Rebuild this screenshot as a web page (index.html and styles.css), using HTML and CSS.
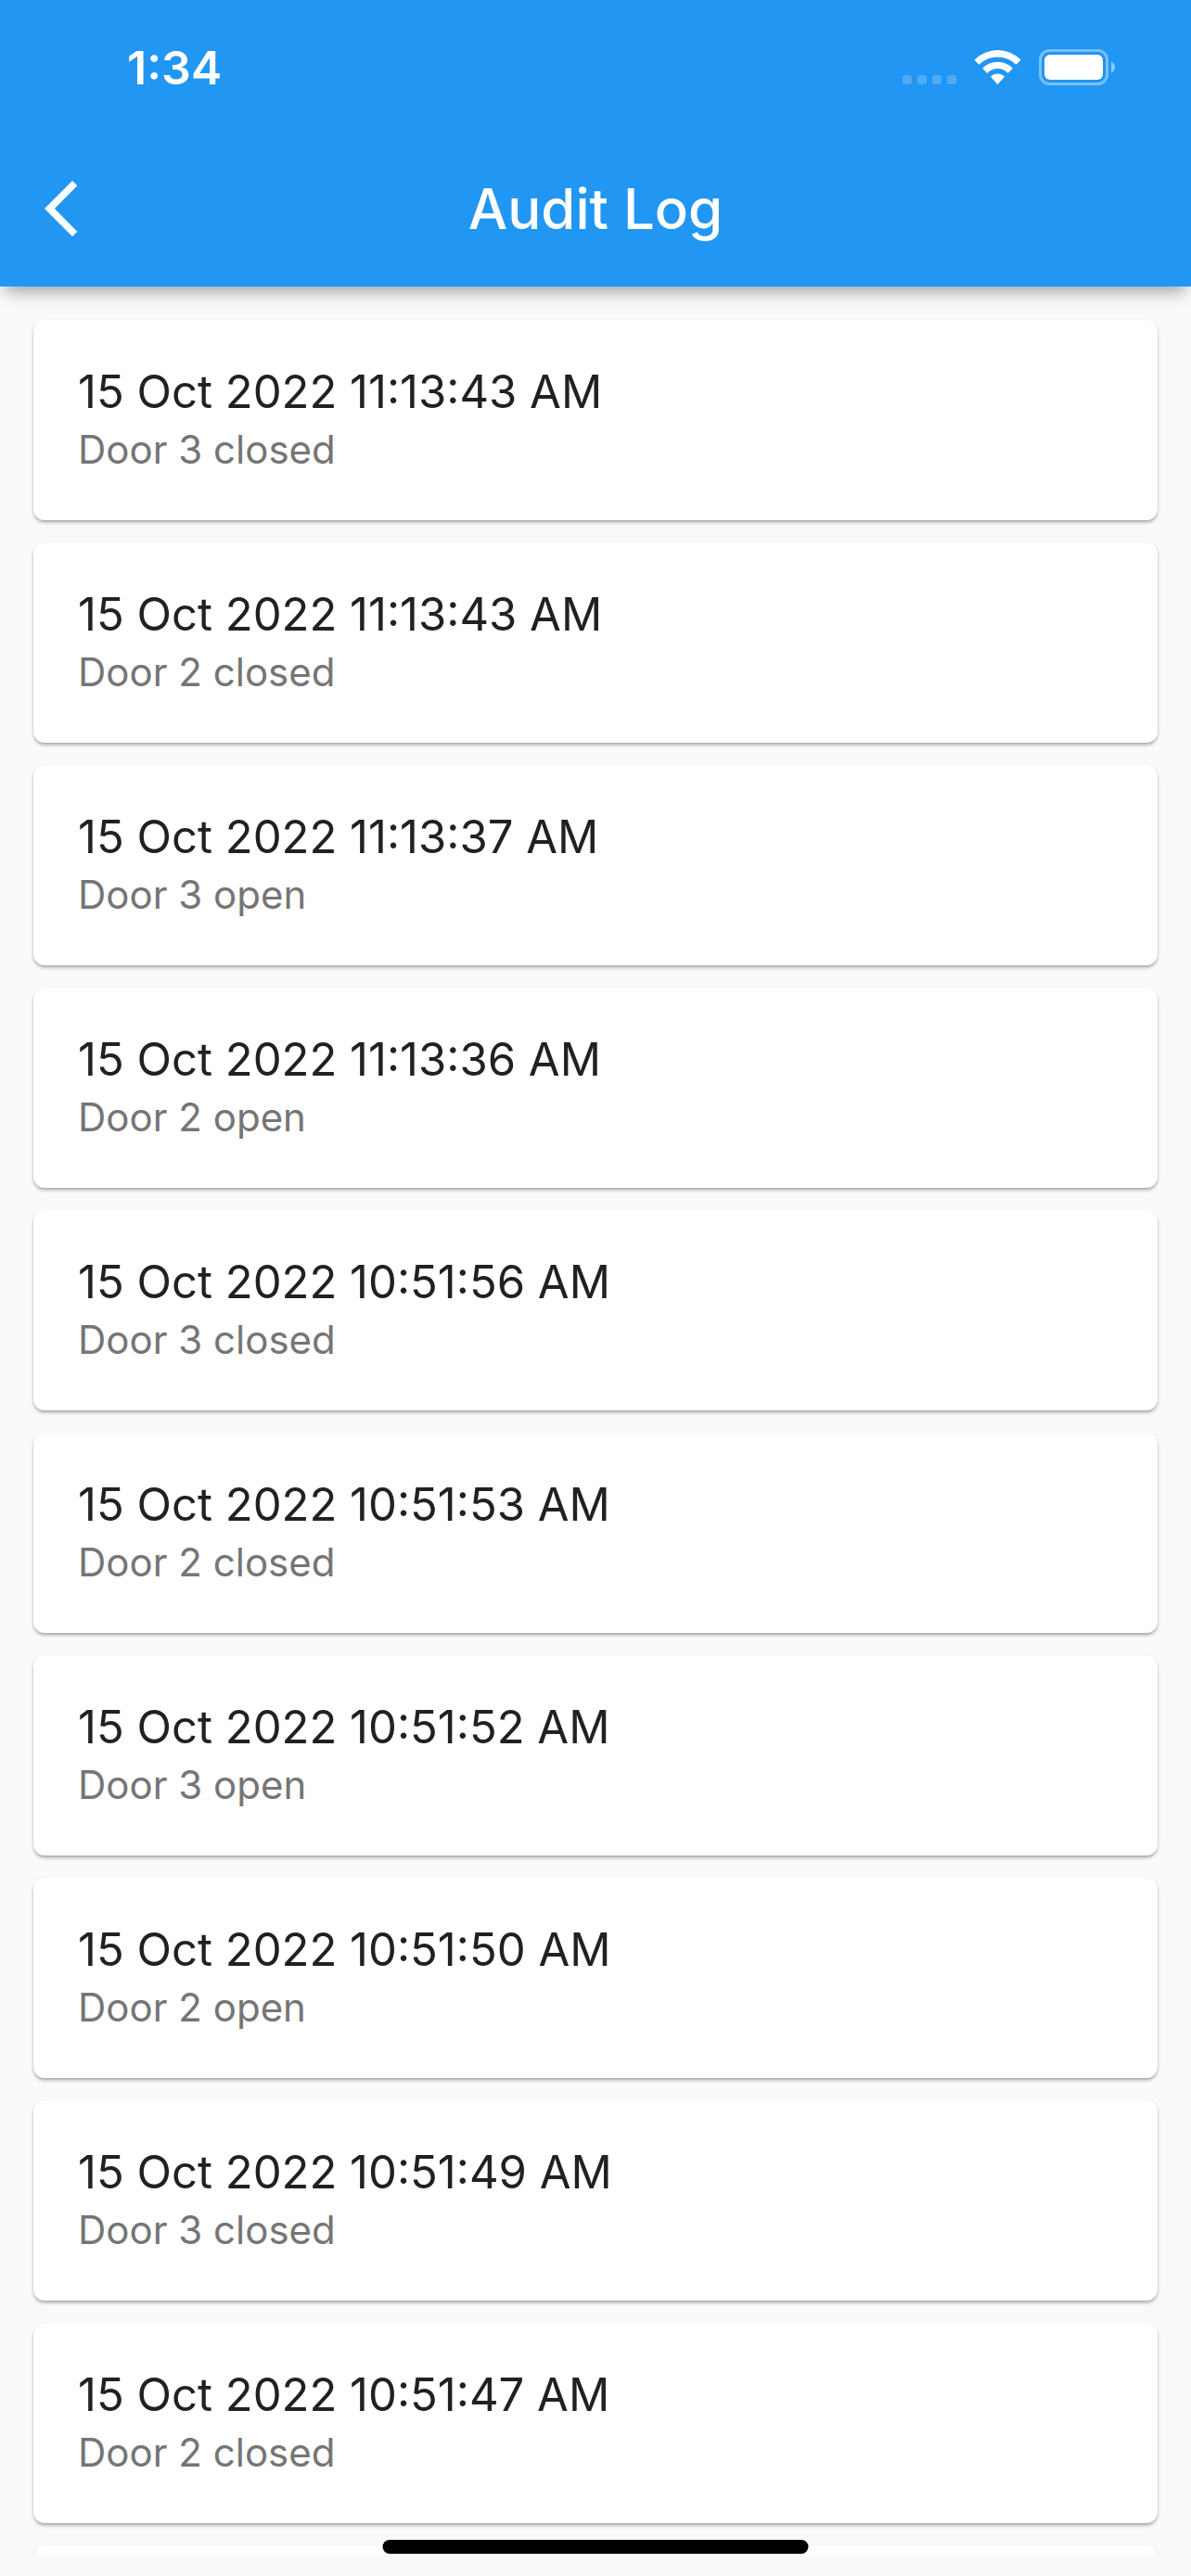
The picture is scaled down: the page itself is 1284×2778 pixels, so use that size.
FILE: index.html
```html
<!DOCTYPE html>
<html lang="en">
<head>
<meta charset="utf-8">
<meta name="viewport" content="width=device-width, initial-scale=1">
<title>Audit Log</title>
<link rel="stylesheet" href="styles.css">
</head>
<body class="screen">
<header class="header">
  <div class="status">
    <time class="clock">1:34</time>
    <svg class="signals" width="232" height="42" viewBox="971 52 232 42" fill="#fff" aria-hidden="true">
      <g fill-opacity=".2">
        <rect x="973" y="81" width="10" height="10" rx="3"/>
        <rect x="989" y="81" width="10" height="10" rx="3"/>
        <rect x="1005" y="81" width="10" height="10" rx="3"/>
        <rect x="1021" y="81" width="10" height="10" rx="3"/>
      </g>
      <path d="M1050.4 64.4Q1061.500 53.900 1075.500 53.900T1100.600 64.400L1095.500 69.700Q1087 61.500 1075.500 61.500T1055.500 69.700Z"/>
      <path d="M1059.200 73.700Q1066 66.800 1075.500 66.800T1091.800 73.700L1086.700 78.900Q1082 74.100 1075.500 74.100T1064.300 78.900Z"/>
      <path d="M1068 82.700Q1071 79.600 1075.500 79.600T1083 82.700L1075.500 91Z"/>
      <rect x="1121.500" y="54.500" width="72" height="36" rx="10" fill="none" stroke="#fff" stroke-opacity=".4" stroke-width="3"/>
      <rect x="1126" y="59" width="63" height="27" rx="6"/>
      <path d="M1198 66.500Q1202 68.500 1202 72.500T1198 78.500Z" fill-opacity=".5"/>
    </svg>
  </div>
  <div class="toolbar">
    <button class="back" type="button" aria-label="Back">
      <svg width="36" height="60" viewBox="0 0 36 60" fill="#fff" aria-hidden="true"><path d="M0 30 30 0 35.300 5.300 10.900 30 35.300 54.700 30 60Z"/></svg>
    </button>
    <h1 class="title">Audit Log</h1>
  </div>
</header>
<main class="content">
  <ul class="log">
    <li class="card"><time class="stamp">15 Oct 2022 11:13:43 AM</time><p class="event">Door 3 closed</p></li>
    <li class="card"><time class="stamp">15 Oct 2022 11:13:43 AM</time><p class="event">Door 2 closed</p></li>
    <li class="card"><time class="stamp">15 Oct 2022 11:13:37 AM</time><p class="event">Door 3 open</p></li>
    <li class="card"><time class="stamp">15 Oct 2022 11:13:36 AM</time><p class="event">Door 2 open</p></li>
    <li class="card"><time class="stamp">15 Oct 2022 10:51:56 AM</time><p class="event">Door 3 closed</p></li>
    <li class="card"><time class="stamp">15 Oct 2022 10:51:53 AM</time><p class="event">Door 2 closed</p></li>
    <li class="card"><time class="stamp">15 Oct 2022 10:51:52 AM</time><p class="event">Door 3 open</p></li>
    <li class="card"><time class="stamp">15 Oct 2022 10:51:50 AM</time><p class="event">Door 2 open</p></li>
    <li class="card"><time class="stamp">15 Oct 2022 10:51:49 AM</time><p class="event">Door 3 closed</p></li>
    <li class="card"><time class="stamp">15 Oct 2022 10:51:47 AM</time><p class="event">Door 2 closed</p></li>
    <li class="card" aria-hidden="true"></li>
  </ul>
</main>
<div class="home-indicator"></div>
</body>
</html>
```

FILE: styles.css
```css
* {
  box-sizing: border-box;
}

.screen {
  position: relative;
  display: flex;
  flex-direction: column;
  height: 100vh;
  margin: 0;
  padding-bottom: 24px;
  overflow: hidden;
  background: #fafafa;
  color: #212121;
  font-family: Inter, "Liberation Sans", sans-serif;
}

.header {
  position: relative;
  z-index: 1;
  flex: none;
  background: #2196f3;
  color: #fff;
  box-shadow: 0 12px 16px -6px rgba(0, 0, 0, 0.34);
}

.status {
  display: flex;
  align-items: center;
  justify-content: space-between;
  height: 141px;
  padding: 5px 81px 0 137px;
}

.clock {
  font-size: 50px;
  font-weight: 600;
  line-height: 60px;
}

.toolbar {
  display: grid;
  grid-template-columns: 168px 1fr 168px;
  align-items: center;
  height: 168px;
}

.back {
  display: flex;
  align-items: center;
  height: 168px;
  padding: 0 48px;
  border: 0;
  background: none;
}

.title {
  margin: 0;
  font-size: 60px;
  font-weight: 500;
  line-height: 72px;
  text-align: center;
}

.content {
  flex: 1;
  min-height: 0;
  overflow: hidden;
}

.log {
  display: flex;
  flex-direction: column;
  gap: 24px;
  margin: 0;
  padding: 36px;
  list-style: none;
}

.card {
  flex: none;
  min-height: 216px;
  padding: 46px 48px;
  border-radius: 12px;
  background: #fff;
  box-shadow: 0 3px 4px -1px rgba(0, 0, 0, 0.32), 0 1px 3px rgba(0, 0, 0, 0.12);
}

.stamp {
  display: block;
  font-size: 49px;
  line-height: 64px;
}

.event {
  margin: 0;
  color: #757575;
  font-size: 42px;
  line-height: 60px;
}

.home-indicator {
  position: absolute;
  bottom: 24px;
  left: 50%;
  width: 459px;
  height: 15px;
  border-radius: 8px;
  background: #000;
  transform: translateX(-50%);
}
```
